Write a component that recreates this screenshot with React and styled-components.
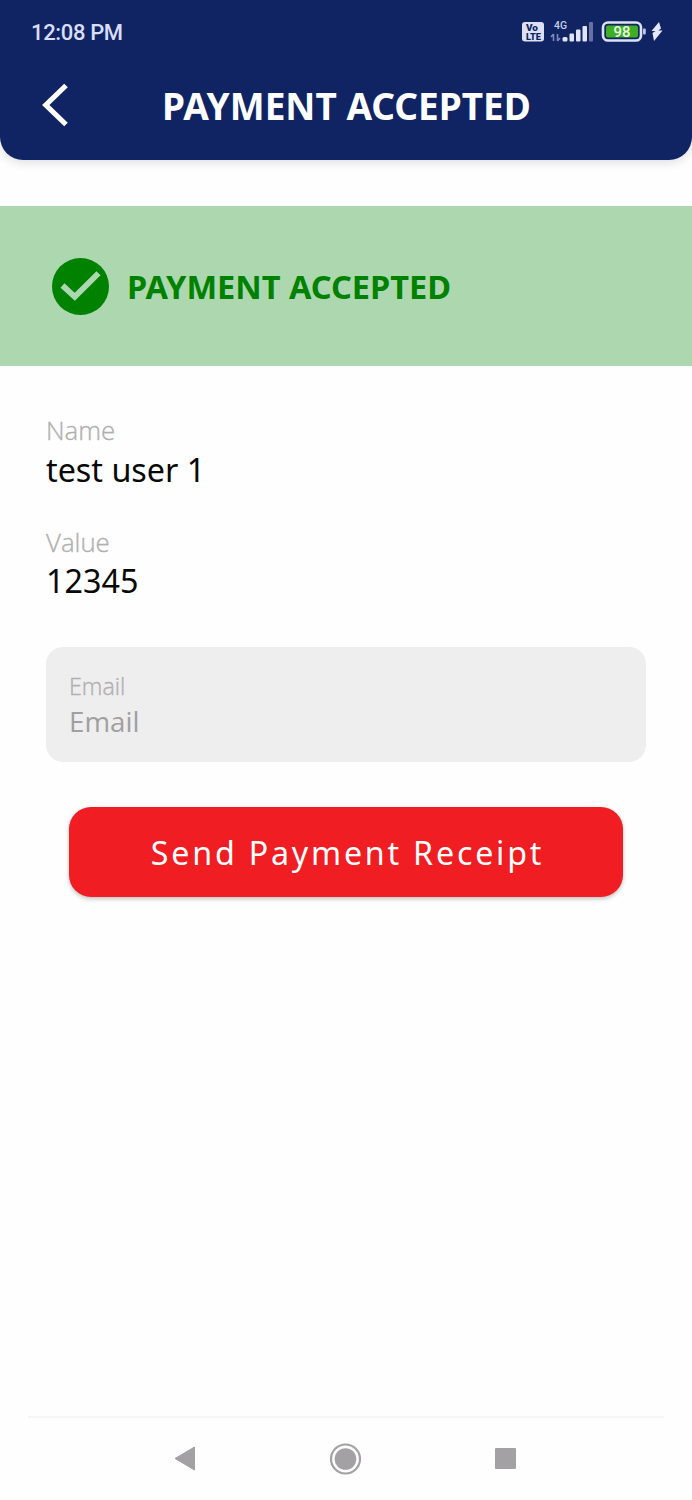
import React from "react";
import styled, { createGlobalStyle } from "styled-components";

const GlobalStyle = createGlobalStyle`
  * { box-sizing: border-box; }
  html, body { margin: 0; padding: 0; background: #fefefe; }
  body { font-family: "Noto Sans", "Open Sans", sans-serif; }
`;

const Screen = styled.div`
  width: 692px;
  height: 1500px;
  display: flex;
  flex-direction: column;
  overflow: hidden;
  background: #fefefe;
`;

const Header = styled.header`
  height: 160px;
  flex: none;
  background: #102463;
  border-radius: 0 0 23px 23px;
  box-shadow: 0 3px 10px rgba(20, 20, 50, 0.13);
`;

const StatusBar = styled.div`
  height: 52px;
  display: flex;
  align-items: center;
  justify-content: space-between;
  padding: 12px 29px 0 31px;
`;

const Clock = styled.time`
  font: 500 22px/26px Roboto, sans-serif;
  letter-spacing: -0.35px;
  margin-top: 2px;
  color: #d9def8;
`;

const StatusIcons = styled.svg`
  display: block;
  width: 142px;
  height: 26px;
`;

const TitleBar = styled.div`
  height: 108px;
  display: grid;
  grid-template-columns: 110px 1fr 110px;
  align-items: center;
`;

const BackButton = styled.button`
  border: 0;
  padding: 0 0 0 42px;
  background: none;
  height: 44px;
  margin-top: -2px;
`;

const BackIcon = styled.svg`
  display: block;
`;

const Title = styled.h1`
  margin: 0;
  padding-left: 1px;
  text-align: center;
  white-space: nowrap;
  color: #fff;
  font-size: 37px;
  line-height: 50px;
  font-weight: 700;
`;

const Banner = styled.section`
  flex: none;
  height: 160px;
  margin-top: 46px;
  padding-left: 52px;
  display: flex;
  align-items: center;
  gap: 18px;
  background: #add8af;
`;

const BannerText = styled.h2`
  margin: 2px 0 0;
  color: #008200;
  font-size: 32.5px;
  line-height: 44px;
  font-weight: 700;
  white-space: nowrap;
`;

const Content = styled.main`
  flex: 1;
  padding: 46px 46px 0;
`;

const Field = styled.div`
  height: 111.5px;
`;

const Label = styled.div`
  font-family: "Open Sans", "Noto Sans", sans-serif;
  font-size: ${(p) => p.$size}px;
  line-height: ${(p) => p.$line}px;
  font-weight: 300;
  -webkit-text-stroke: 0.35px #b0b0b0;
  color: #b0b0b0;
`;

const Value = styled.div`
  margin-top: -0.5px;
  font-size: 32.3px;
  line-height: 42px;
  color: #080808;
`;

const EmailBox = styled.label`
  height: 115px;
  margin-top: 12px;
  padding: 24px 23px;
  display: flex;
  flex-direction: column;
  border-radius: 17px;
  background: #eee;
`;

const EmailInput = styled.input`
  width: 100%;
  height: 38px;
  padding: 0;
  border: 0;
  outline: 0;
  background: transparent;
  font: 400 27.7px/38px "Open Sans", "Noto Sans", sans-serif;
  &::placeholder { color: #a0a0a0; opacity: 1; }
`;

const SendButton = styled.button`
  display: block;
  width: 554px;
  height: 90px;
  margin: 44.5px auto 0;
  padding: 2px 0 0 3px;
  border: 0;
  border-radius: 22px;
  background: #f01d22;
  box-shadow: 0 2px 4px rgba(0, 0, 0, 0.24);
  color: #fff;
  font: 400 32.2px/46px "Noto Sans", sans-serif;
  letter-spacing: 2.8px;
`;

const NavBar = styled.nav`
  flex: none;
  height: 84px;
  margin: 0 28px;
  border-top: 2px solid #f6f6f6;
  display: flex;
  align-items: center;
  justify-content: center;
  gap: 134px;
  padding: 0 2px 1px 0;
`;

function StatusGlyphs() {
  return (
    <StatusIcons viewBox="0 0 142 26">
      <rect x="1" y="3" width="22" height="19.5" rx="3" fill="#dde0f3" />
      <g fontFamily="Roboto, sans-serif" fontWeight="900" fill="#102463">
        <text x="5" y="12" fontSize="9.5" textLength="12" lengthAdjust="spacingAndGlyphs">Vo</text>
        <text x="5" y="20.5" fontSize="9.5" textLength="15" lengthAdjust="spacingAndGlyphs">LTE</text>
      </g>
      <text x="33" y="9.6" fontFamily="Roboto, sans-serif" fontSize="11" fontWeight="500" fill="#c7cde9" textLength="13" lengthAdjust="spacingAndGlyphs">4G</text>
      <path d="M32.5 22v-7M30 18l2.5-3M36.5 15v7M36.5 22l2.5-3" stroke="#7f8abd" strokeWidth="1.5" fill="none" />
      <g fill="#e0e4f8">
        <rect x="41.5" y="18" width="5" height="4.5" rx="1.5" />
        <rect x="48.5" y="14.5" width="4.5" height="8" rx="1" />
        <rect x="55" y="10.5" width="4.5" height="12" rx="1" />
        <rect x="61.5" y="7" width="4.5" height="15.5" rx="1" />
      </g>
      <rect x="68" y="3" width="4" height="19.5" rx="1" fill="#66719f" />
      <rect x="82" y="3.5" width="38" height="18" rx="5" fill="none" stroke="#dde1f6" strokeWidth="2.6" />
      <rect x="85" y="6.5" width="32" height="12" rx="2" fill="#3fae20" />
      <rect x="122" y="9.5" width="2.8" height="6" rx="1" fill="#bdc5e6" />
      <text x="92.5" y="17.6" fontFamily="Roboto, sans-serif" fontSize="14" fontWeight="500" fill="#eaffea" textLength="17" lengthAdjust="spacingAndGlyphs">98</text>
      <path d="M138 3L130.5 12h4l-3 2 1.5 8 8.5-10.5h-4.2l2.7-2z" fill="#e5e8fa" />
    </StatusIcons>
  );
}

export default function App() {
  return (
    <Screen>
      <GlobalStyle />
      <Header>
        <StatusBar>
          <Clock>12:08 PM</Clock>
          <StatusGlyphs />
        </StatusBar>
        <TitleBar>
          <BackButton aria-label="Back">
            <BackIcon width="26" height="44" viewBox="0 0 26 44">
              <path d="M24 2.5L3.8 22 24 41.5" fill="none" stroke="#fff" strokeWidth="5.2" />
            </BackIcon>
          </BackButton>
          <Title>PAYMENT ACCEPTED</Title>
        </TitleBar>
      </Header>
      <Banner>
        <svg width="57" height="57" viewBox="0 0 57 57">
          <circle cx="28.5" cy="28.5" r="28.5" fill="#008200" />
          <path d="M10.5 27.5L22.8 38.8 46.5 15.3" fill="none" stroke="#add8af" strokeWidth="5.8" />
        </svg>
        <BannerText>PAYMENT ACCEPTED</BannerText>
      </Banner>
      <Content>
        <Field>
          <Label $size={25.8} $line={36}>Name</Label>
          <Value>test user 1</Value>
        </Field>
        <Field>
          <Label $size={25.8} $line={36}>Value</Label>
          <Value>12345</Value>
        </Field>
        <EmailBox>
          <Label as="span" $size={23.3} $line={31}>Email</Label>
          <EmailInput type="email" placeholder="Email" />
        </EmailBox>
        <SendButton>Send Payment Receipt</SendButton>
      </Content>
      <NavBar>
        <svg width="21" height="25" viewBox="0 0 21 25">
          <path d="M1 12.5L20.5 1v23z" fill="#a3a1a4" stroke="#a3a1a4" strokeLinejoin="round" />
        </svg>
        <svg width="32" height="32" viewBox="0 0 32 32">
          <circle cx="16.5" cy="16" r="14.5" fill="none" stroke="#a3a1a4" strokeWidth="2.2" />
          <circle cx="16.5" cy="16" r="10.8" fill="#a3a1a4" />
        </svg>
        <svg width="21" height="21" viewBox="0 0 21 21">
          <rect width="21" height="21" rx="1" fill="#a3a1a4" />
        </svg>
      </NavBar>
    </Screen>
  );
}
